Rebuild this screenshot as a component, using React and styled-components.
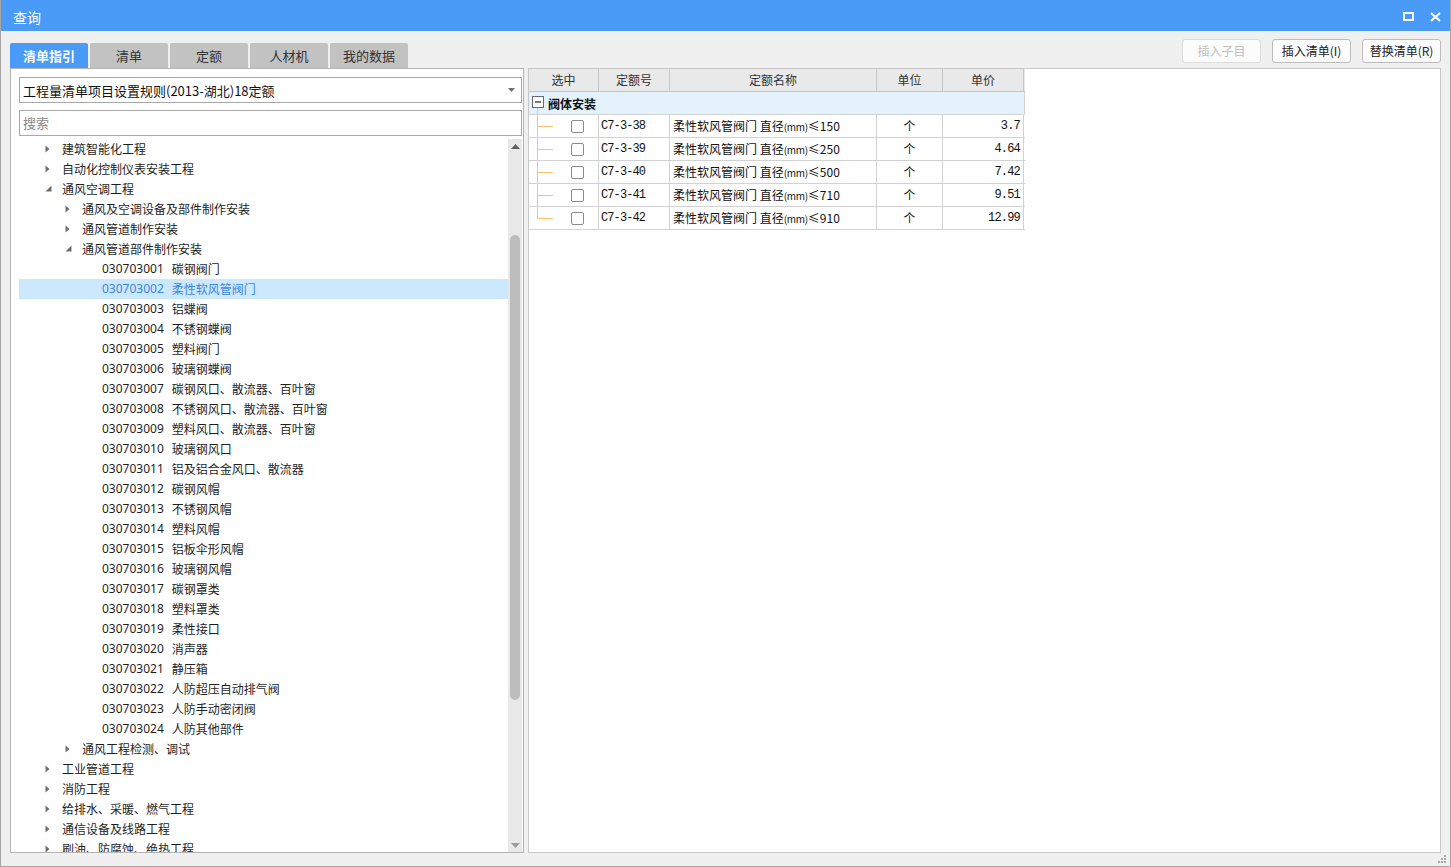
import React from "react";
import styled, { createGlobalStyle } from "styled-components";

const CJK = `"Noto Sans CJK SC", "Microsoft YaHei", sans-serif`;
const MONO = `"Liberation Mono", "Noto Sans CJK SC", monospace`;

const GlobalStyle = createGlobalStyle`
  html, body {
    margin: 0;
    padding: 0;
    background: #ffffff;
  }
  * {
    box-sizing: border-box;
  }
`;

const TREE = [
  { level: 0, text: "建筑智能化工程", state: "closed" },
  { level: 0, text: "自动化控制仪表安装工程", state: "closed" },
  { level: 0, text: "通风空调工程", state: "open" },
  { level: 1, text: "通风及空调设备及部件制作安装", state: "closed" },
  { level: 1, text: "通风管道制作安装", state: "closed" },
  { level: 1, text: "通风管道部件制作安装", state: "open" },
  { level: 2, code: "030703001", text: "碳钢阀门" },
  { level: 2, code: "030703002", text: "柔性软风管阀门", selected: true },
  { level: 2, code: "030703003", text: "铝蝶阀" },
  { level: 2, code: "030703004", text: "不锈钢蝶阀" },
  { level: 2, code: "030703005", text: "塑料阀门" },
  { level: 2, code: "030703006", text: "玻璃钢蝶阀" },
  { level: 2, code: "030703007", text: "碳钢风口、散流器、百叶窗" },
  { level: 2, code: "030703008", text: "不锈钢风口、散流器、百叶窗" },
  { level: 2, code: "030703009", text: "塑料风口、散流器、百叶窗" },
  { level: 2, code: "030703010", text: "玻璃钢风口" },
  { level: 2, code: "030703011", text: "铝及铝合金风口、散流器" },
  { level: 2, code: "030703012", text: "碳钢风帽" },
  { level: 2, code: "030703013", text: "不锈钢风帽" },
  { level: 2, code: "030703014", text: "塑料风帽" },
  { level: 2, code: "030703015", text: "铝板伞形风帽" },
  { level: 2, code: "030703016", text: "玻璃钢风帽" },
  { level: 2, code: "030703017", text: "碳钢罩类" },
  { level: 2, code: "030703018", text: "塑料罩类" },
  { level: 2, code: "030703019", text: "柔性接口" },
  { level: 2, code: "030703020", text: "消声器" },
  { level: 2, code: "030703021", text: "静压箱" },
  { level: 2, code: "030703022", text: "人防超压自动排气阀" },
  { level: 2, code: "030703023", text: "人防手动密闭阀" },
  { level: 2, code: "030703024", text: "人防其他部件" },
  { level: 1, text: "通风工程检测、调试", state: "closed" },
  { level: 0, text: "工业管道工程", state: "closed" },
  { level: 0, text: "消防工程", state: "closed" },
  { level: 0, text: "给排水、采暖、燃气工程", state: "closed" },
  { level: 0, text: "通信设备及线路工程", state: "closed" },
  { level: 0, text: "刷油、防腐蚀、绝热工程", state: "closed" },
];

const ROWS = [
  { code: "C7-3-38", size: "150", price: "3.7" },
  { code: "C7-3-39", size: "250", price: "4.64" },
  { code: "C7-3-40", size: "500", price: "7.42" },
  { code: "C7-3-41", size: "710", price: "9.51" },
  { code: "C7-3-42", size: "910", price: "12.99" },
];

const COLS = "70px 71px 207px 66px 81px";

const App = () => {
  return (
    <>
      <GlobalStyle />
      <Window>
        <TitleBar>
          <Title>查询</Title>
          <TitleIcons>
            <svg width="11" height="9" viewBox="0 0 11 9">
              <rect x="1" y="1" width="9" height="7" fill="none" stroke="#fff" strokeWidth="2" />
            </svg>
            <svg width="11" height="10" viewBox="0 0 11 10">
              <path d="M1 1 L10 9 M10 1 L1 9" stroke="#fff" strokeWidth="2.2" />
            </svg>
          </TitleIcons>
        </TitleBar>

        <Body>
          <TopRow>
            <Tabs>
              <Tab $active>清单指引</Tab>
              <Tab>清单</Tab>
              <Tab>定额</Tab>
              <Tab>人材机</Tab>
              <Tab>我的数据</Tab>
            </Tabs>
            <Buttons>
              <Btn disabled>插入子目</Btn>
              <Btn>插入清单(I)</Btn>
              <Btn>替换清单(R)</Btn>
            </Buttons>
          </TopRow>

          <Content>
            <LeftPanel>
              <Combo>
                <span>工程量清单项目设置规则(2013-湖北)18定额</span>
                <svg width="7" height="4" viewBox="0 0 7 4">
                  <path d="M0 0 H7 L3.5 4 Z" fill="#707070" />
                </svg>
              </Combo>
              <Search>搜索</Search>
              <TreeArea>
                <TreeList>
                  {TREE.map((n, i) => (
                    <TreeRow key={i} $level={n.level} $selected={n.selected}>
                      <Arrow>
                        {n.state === "closed" && (
                          <svg width="5" height="8" viewBox="0 0 5 8">
                            <path d="M0.5 0.5 L4.5 4 L0.5 7.5 Z" fill="#6e6e6e" />
                          </svg>
                        )}
                        {n.state === "open" && (
                          <svg width="7" height="7" viewBox="0 0 7 7">
                            <path d="M6.5 0.5 V6.5 H0.5 Z" fill="#6e6e6e" />
                          </svg>
                        )}
                      </Arrow>
                      {n.code && <Code>{n.code}</Code>}
                      <span>{n.text}</span>
                    </TreeRow>
                  ))}
                </TreeList>
                <Scrollbar>
                  <ScrollBtn>
                    <svg width="9" height="5" viewBox="0 0 9 5">
                      <path d="M0 5 L4.5 0 L9 5 Z" fill="#606060" />
                    </svg>
                  </ScrollBtn>
                  <Track>
                    <Thumb />
                  </Track>
                  <ScrollBtn>
                    <svg width="9" height="5" viewBox="0 0 9 5">
                      <path d="M0 0 L4.5 5 L9 0 Z" fill="#9a9a9a" />
                    </svg>
                  </ScrollBtn>
                </Scrollbar>
              </TreeArea>
            </LeftPanel>

            <RightPanel>
              <Table>
                <HeadRow>
                  <HeadCell>选中</HeadCell>
                  <HeadCell>定额号</HeadCell>
                  <HeadCell>定额名称</HeadCell>
                  <HeadCell>单位</HeadCell>
                  <HeadCell>单价</HeadCell>
                </HeadRow>
                <GroupRow>
                  <svg width="17" height="23" viewBox="0 0 17 23">
                    <rect x="3.5" y="4.5" width="11" height="11" fill="#fff" stroke="#6a6a6a" />
                    <path d="M6 10 H12" stroke="#222" strokeWidth="1.2" />
                    <path d="M8.5 16 V23" stroke="#f9c46f" />
                  </svg>
                  <GroupText>阀体安装</GroupText>
                </GroupRow>
                {ROWS.map((r, i) => (
                  <DataRow key={r.code}>
                    <CheckCell>
                      <svg width="24" height="23" viewBox="0 0 24 23">
                        <path
                          d={i === ROWS.length - 1 ? "M8.5 0 V11.5" : "M8.5 0 V23"}
                          stroke="#f9c46f"
                        />
                        <path d="M8.5 11.5 H24" stroke="#f9c46f" />
                      </svg>
                      <Check />
                    </CheckCell>
                    <CodeCell>{r.code}</CodeCell>
                    <NameCell>
                      柔性软风管阀门 直径<Small>(mm)</Small>≤{r.size}
                    </NameCell>
                    <UnitCell>个</UnitCell>
                    <PriceCell>{r.price}</PriceCell>
                  </DataRow>
                ))}
              </Table>
            </RightPanel>
          </Content>

          <Footer>
            <svg width="9" height="9" viewBox="0 0 9 9">
              <rect x="6" y="0" width="2" height="2" fill="#a8a8a8" />
              <rect x="3" y="3" width="2" height="2" fill="#a8a8a8" />
              <rect x="6" y="3" width="2" height="2" fill="#a8a8a8" />
              <rect x="0" y="6" width="2" height="2" fill="#a8a8a8" />
              <rect x="3" y="6" width="2" height="2" fill="#a8a8a8" />
              <rect x="6" y="6" width="2" height="2" fill="#a8a8a8" />
            </svg>
          </Footer>
        </Body>
      </Window>
    </>
  );
};

export default App;

const Window = styled.div`
  width: 1451px;
  height: 867px;
  display: flex;
  flex-direction: column;
  background: #f0f0f0;
  border: 1px solid #a6a6a6;
  border-top: none;
  font-family: ${CJK};
  overflow: hidden;
`;

const TitleBar = styled.div`
  height: 31px;
  margin: 0 -1px;
  background: #4a9bf8;
  display: flex;
  align-items: center;
  justify-content: space-between;
  padding: 0 10px 0 13px;
  flex-shrink: 0;
`;

const Title = styled.div`
  color: #ffffff;
  font-size: 14px;
  line-height: 20px;
  padding-top: 3px;
`;

const TitleIcons = styled.div`
  display: flex;
  align-items: center;
  gap: 16px;
  padding-top: 2px;
`;

const Body = styled.div`
  flex: 1;
  display: flex;
  flex-direction: column;
  padding: 8px 9px 0 9px;
  min-height: 0;
`;

const TopRow = styled.div`
  height: 29px;
  display: flex;
  justify-content: space-between;
  align-items: flex-start;
  flex-shrink: 0;
`;

const Tabs = styled.div`
  display: flex;
  gap: 2px;
  align-self: flex-end;
`;

const Tab = styled.div`
  width: 78px;
  height: 25px;
  border-radius: 2px 2px 0 0;
  background: ${(p) => (p.$active ? "#4a9bf8" : "#c2c2c2")};
  color: ${(p) => (p.$active ? "#ffffff" : "#333333")};
  font-weight: ${(p) => (p.$active ? 700 : 400)};
  font-size: 13px;
  line-height: 25px;
  text-align: center;
`;

const Buttons = styled.div`
  display: flex;
  gap: 11px;
`;

const Btn = styled.div`
  width: 79px;
  height: 24px;
  border: 1px solid ${(p) => (p.disabled ? "#dcdcdc" : "#bcbcbc")};
  border-radius: 3px;
  background: #fcfcfc;
  color: ${(p) => (p.disabled ? "#c0c0c0" : "#222222")};
  font-size: 12px;
  line-height: 22px;
  text-align: center;
`;

const Content = styled.div`
  flex: 1;
  display: flex;
  gap: 4px;
  min-height: 0;
`;

const LeftPanel = styled.div`
  width: 514px;
  display: flex;
  flex-direction: column;
  background: #ffffff;
  border: 1px solid #b4b4b4;
  padding: 8px 1px 0 8px;
  min-height: 0;
`;

const Combo = styled.div`
  height: 26px;
  border: 1px solid #a8a8a8;
  display: flex;
  align-items: center;
  justify-content: space-between;
  padding: 0 6px 0 3px;
  font-size: 13px;
  color: #111111;
  flex-shrink: 0;
`;

const Search = styled.div`
  height: 26px;
  margin-top: 7px;
  border: 1px solid #a8a8a8;
  padding-left: 3px;
  font-size: 13px;
  line-height: 24px;
  color: #8a8a8a;
  flex-shrink: 0;
`;

const TreeArea = styled.div`
  flex: 1;
  display: flex;
  margin-top: 3px;
  min-height: 0;
  overflow: hidden;
`;

const TreeList = styled.div`
  flex: 1;
  overflow: hidden;
`;

const TreeRow = styled.div`
  height: 20px;
  display: flex;
  align-items: center;
  padding-left: ${(p) => 24 + p.$level * 20}px;
  padding-bottom: 1px;
  background: ${(p) => (p.$selected ? "#cce8ff" : "transparent")};
  color: ${(p) => (p.$selected ? "#3c84dc" : "#1e1e1e")};
  font-size: 12px;
  white-space: nowrap;
`;

const Arrow = styled.div`
  width: 19px;
  height: 19px;
  display: flex;
  align-items: center;
  padding-left: 2px;
  flex-shrink: 0;
`;

const Code = styled.span`
  margin-right: 8px;
  font-family: "Noto Sans", ${CJK};
  font-size: 12px;
`;

const Scrollbar = styled.div`
  width: 14px;
  background: #e8e8e8;
  display: flex;
  flex-direction: column;
  flex-shrink: 0;
`;

const ScrollBtn = styled.div`
  height: 14px;
  display: flex;
  align-items: center;
  justify-content: center;
  flex-shrink: 0;
`;

const Track = styled.div`
  flex: 1;
  padding-top: 82px;
`;

const Thumb = styled.div`
  width: 10px;
  height: 465px;
  margin-left: 2px;
  border-radius: 5px;
  background: #bdbdbd;
`;

const RightPanel = styled.div`
  flex: 1;
  background: #ffffff;
  border: 1px solid #c8c8c8;
  min-height: 0;
`;

const Table = styled.div`
  width: 496px;
`;

const HeadRow = styled.div`
  display: grid;
  grid-template-columns: ${COLS};
  height: 23px;
  background: #e9e9e9;
  border-bottom: 1px solid #c4c4c4;
`;

const HeadCell = styled.div`
  border-right: 1px solid #c8c8c8;
  font-size: 12px;
  line-height: 22px;
  text-align: center;
  color: #333333;
`;

const GroupRow = styled.div`
  height: 23px;
  display: flex;
  align-items: center;
  background: #e4f2fd;
  border-bottom: 1px solid #d2d2d2;
  border-right: 1px solid #d2d2d2;
  padding-left: 0;
`;

const GroupText = styled.span`
  margin-left: 2px;
  font-size: 12px;
  font-weight: 700;
  color: #111111;
`;

const DataRow = styled.div`
  display: grid;
  grid-template-columns: ${COLS};
  height: 23px;
  border-bottom: 1px solid #d2d2d2;
`;

const Cell = styled.div`
  border-right: 1px solid #d2d2d2;
  font-size: 12px;
  line-height: 22px;
  color: #111111;
  white-space: nowrap;
  overflow: hidden;
`;

const CheckCell = styled(Cell)`
  display: flex;
  align-items: center;
`;

const Check = styled.div`
  width: 13px;
  height: 13px;
  margin-left: 18px;
  border: 1px solid #8c8c8c;
  border-radius: 2px;
  background: #ffffff;
`;

const CodeCell = styled(Cell)`
  padding-left: 2px;
  font-family: ${MONO};
  font-size: 12px;
  letter-spacing: -0.9px;
`;

const NameCell = styled(Cell)`
  padding-left: 3px;
`;

const Small = styled.span`
  font-size: 10px;
  letter-spacing: -0.3px;
`;

const UnitCell = styled(Cell)`
  text-align: center;
`;

const PriceCell = styled(Cell)`
  text-align: right;
  padding-right: 3px;
  font-family: ${MONO};
  font-size: 12px;
  letter-spacing: -0.8px;
`;

const Footer = styled.div`
  height: 13px;
  display: flex;
  justify-content: flex-end;
  align-items: flex-end;
  padding-bottom: 2px;
  margin-right: -6px;
  flex-shrink: 0;
`;
